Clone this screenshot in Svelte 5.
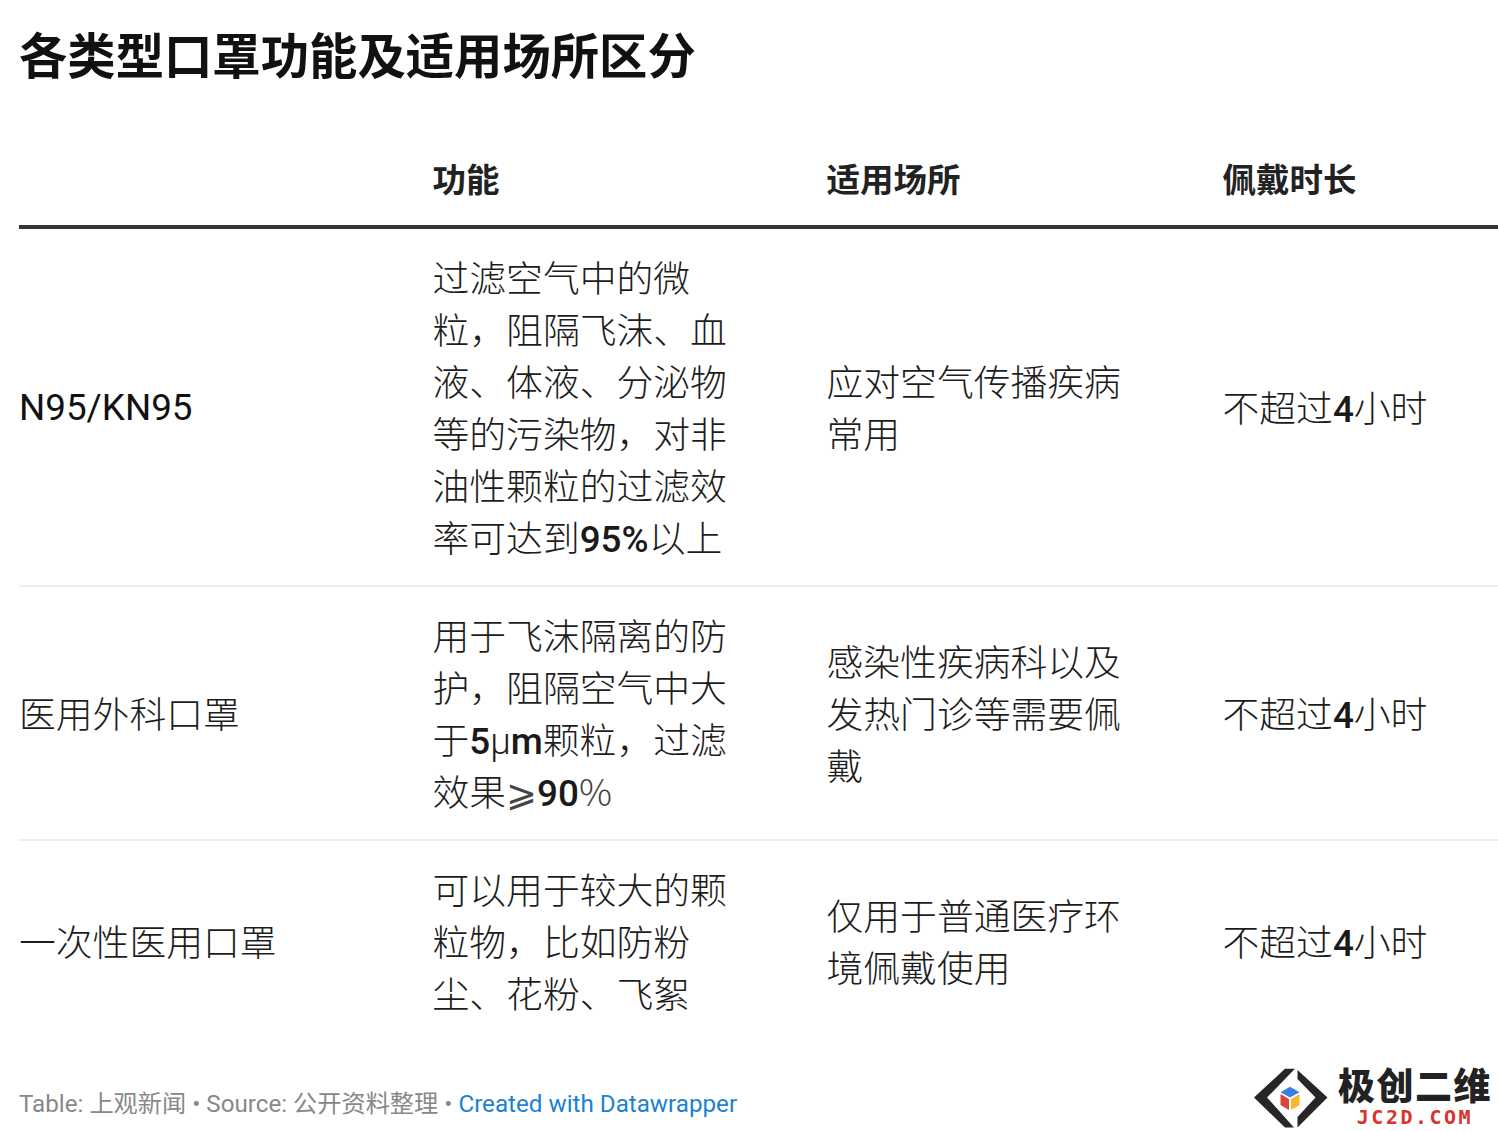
<script>
	// parts marked b are the heavier latin digits, s the thin symbols
	const rows = [
		{ name: "N95/KN95", strong: true, fn: [{ t: "过滤空气中的微粒，阻隔飞沫、血液、体液、分泌物等的污染物，对非油性颗粒的过滤效率可达到" }, { t: "95%", b: true }, { t: "以上" }], place: "应对空气传播疾病常用" },
		{ name: "医用外科口罩", fn: [{ t: "用于飞沫隔离的防护，阻隔空气中大于" }, { t: "5", b: true }, { t: "μ" }, { t: "m", b: true }, { t: "颗粒，过滤效果" }, { t: "⩾", s: true }, { t: "90", b: true }, { t: "%", s: true }], place: "感染性疾病科以及发热门诊等需要佩戴" },
		{ name: "一次性医用口罩", fn: [{ t: "可以用于较大的颗粒物，比如防粉尘、花粉、飞絮" }], place: "仅用于普通医疗环境佩戴使用" },
	];
</script>

<main class="page">
	<h1>各类型口罩功能及适用场所区分</h1>

	<table>
		<thead>
			<tr>
				<th class="c1"></th>
				<th class="c2">功能</th>
				<th class="c3">适用场所</th>
				<th class="c4">佩戴时长</th>
			</tr>
		</thead>
		<tbody>
			{#each rows as row}
				<tr>
					<td class="name" class:strong={row.strong}>{row.name}</td>
					<td><div class="wrap">{#each row.fn as part}<span class:b={part.b} class:s={part.s}>{part.t}</span>{/each}</div></td>
					<td class="place"><div class="wrap">{row.place}</div></td>
					<td class="time">不超过<span class="b">4</span>小时</td>
				</tr>
			{/each}
		</tbody>
	</table>

	<footer>
		<p class="notes">Table: 上观新闻 • Source: 公开资料整理 • <a href="#top">Created with Datawrapper</a></p>
		<div class="logo">
			<svg width="82" height="67" viewBox="0 0 82 67">
				<path d="M35 4.7 L45 4.7 L17 33.5 L44 63.5 L35 63.5 L4 33.5 Z" fill="#262626" />
				<path d="M47.5 6 L77.5 33.5 L47.5 63.5 L47.5 53 L65.5 33.5 L47.5 15 Z" fill="#262626" />
				<path d="M40 22.7 L49.5 28.3 L40 33.5 L30.5 28.3 Z" fill="#3b7de0" />
				<path d="M30.5 30 L39 35 L39 46 L30.5 41 Z" fill="#d8453a" />
				<path d="M49.5 30 L41 35 L41 46 L49.5 41 Z" fill="#f5b82e" />
			</svg>
			<div class="brand">
				<span class="cn">极创二维</span>
				<span class="en">JC2D.COM</span>
			</div>
		</div>
	</footer>
</main>

<style>
	:global(body) {
		background: #fff;
	}

	.page {
		box-sizing: border-box;
		width: 1498px;
		height: 1131px;
		padding: 28px 0 0 19px;
		overflow: hidden;
		font-family: Roboto, "Noto Sans CJK SC", "DejaVu Sans", sans-serif;
		color: #1d1d1d;
	}

	h1 {
		margin: 0;
		font-size: 48.35px;
		line-height: 60px;
		font-weight: 700;
		color: #111;
	}

	table {
		border-collapse: collapse;
		table-layout: fixed;
		width: 1479px;
		margin-top: 71px;
	}

	th {
		text-align: left;
		font-size: 33.5px;
		font-weight: 700;
		line-height: 44px;
		padding: 0 0 22px;
		border-bottom: 4px solid #333;
		color: #222;
	}

	.c1 { width: 413.5px; }
	.c2 { width: 394px; }
	.c3 { width: 396px; }

	td {
		padding: 25px 0 19px;
		font-size: 36.8px;
		line-height: 52px;
		font-weight: 300;
		border-bottom: 2px solid #eee;
		vertical-align: middle;
	}

	tbody tr:last-child td {
		border-bottom: none;
	}

	.wrap {
		width: 296px;
	}

	.b {
		font-weight: 500;
		color: #1a1a1a;
	}

	.s {
		font-family: "Noto Sans CJK SC", "DejaVu Sans", sans-serif;
		font-weight: 200;
		line-height: 0;
		color: #444;
	}

	td.name.strong {
		padding: 23px 0 21px;
		font-weight: 400;
		color: #111;
	}

	footer {
		display: flex;
		justify-content: space-between;
		align-items: flex-start;
		margin-top: 23px;
		padding-right: 6px;
	}

	.notes {
		margin: 26px 0 0;
		font-size: 24.2px;
		line-height: 28px;
		color: #888;
	}

	.notes a {
		color: #1d81d0;
		text-decoration: none;
	}

	.logo {
		display: flex;
		align-items: flex-start;
		gap: 6px;
	}

	.brand {
		display: flex;
		flex-direction: column;
		align-items: center;
		width: 154px;
		margin-top: 4px;
	}

	.cn {
		font-size: 37px;
		line-height: 39px;
		font-weight: 900;
		letter-spacing: 1.5px;
		color: #222;
	}

	.en {
		font-family: "DejaVu Sans Mono", monospace;
		font-size: 20px;
		line-height: 20px;
		font-weight: 700;
		letter-spacing: 2.5px;
		color: #d8342c;
	}
</style>
